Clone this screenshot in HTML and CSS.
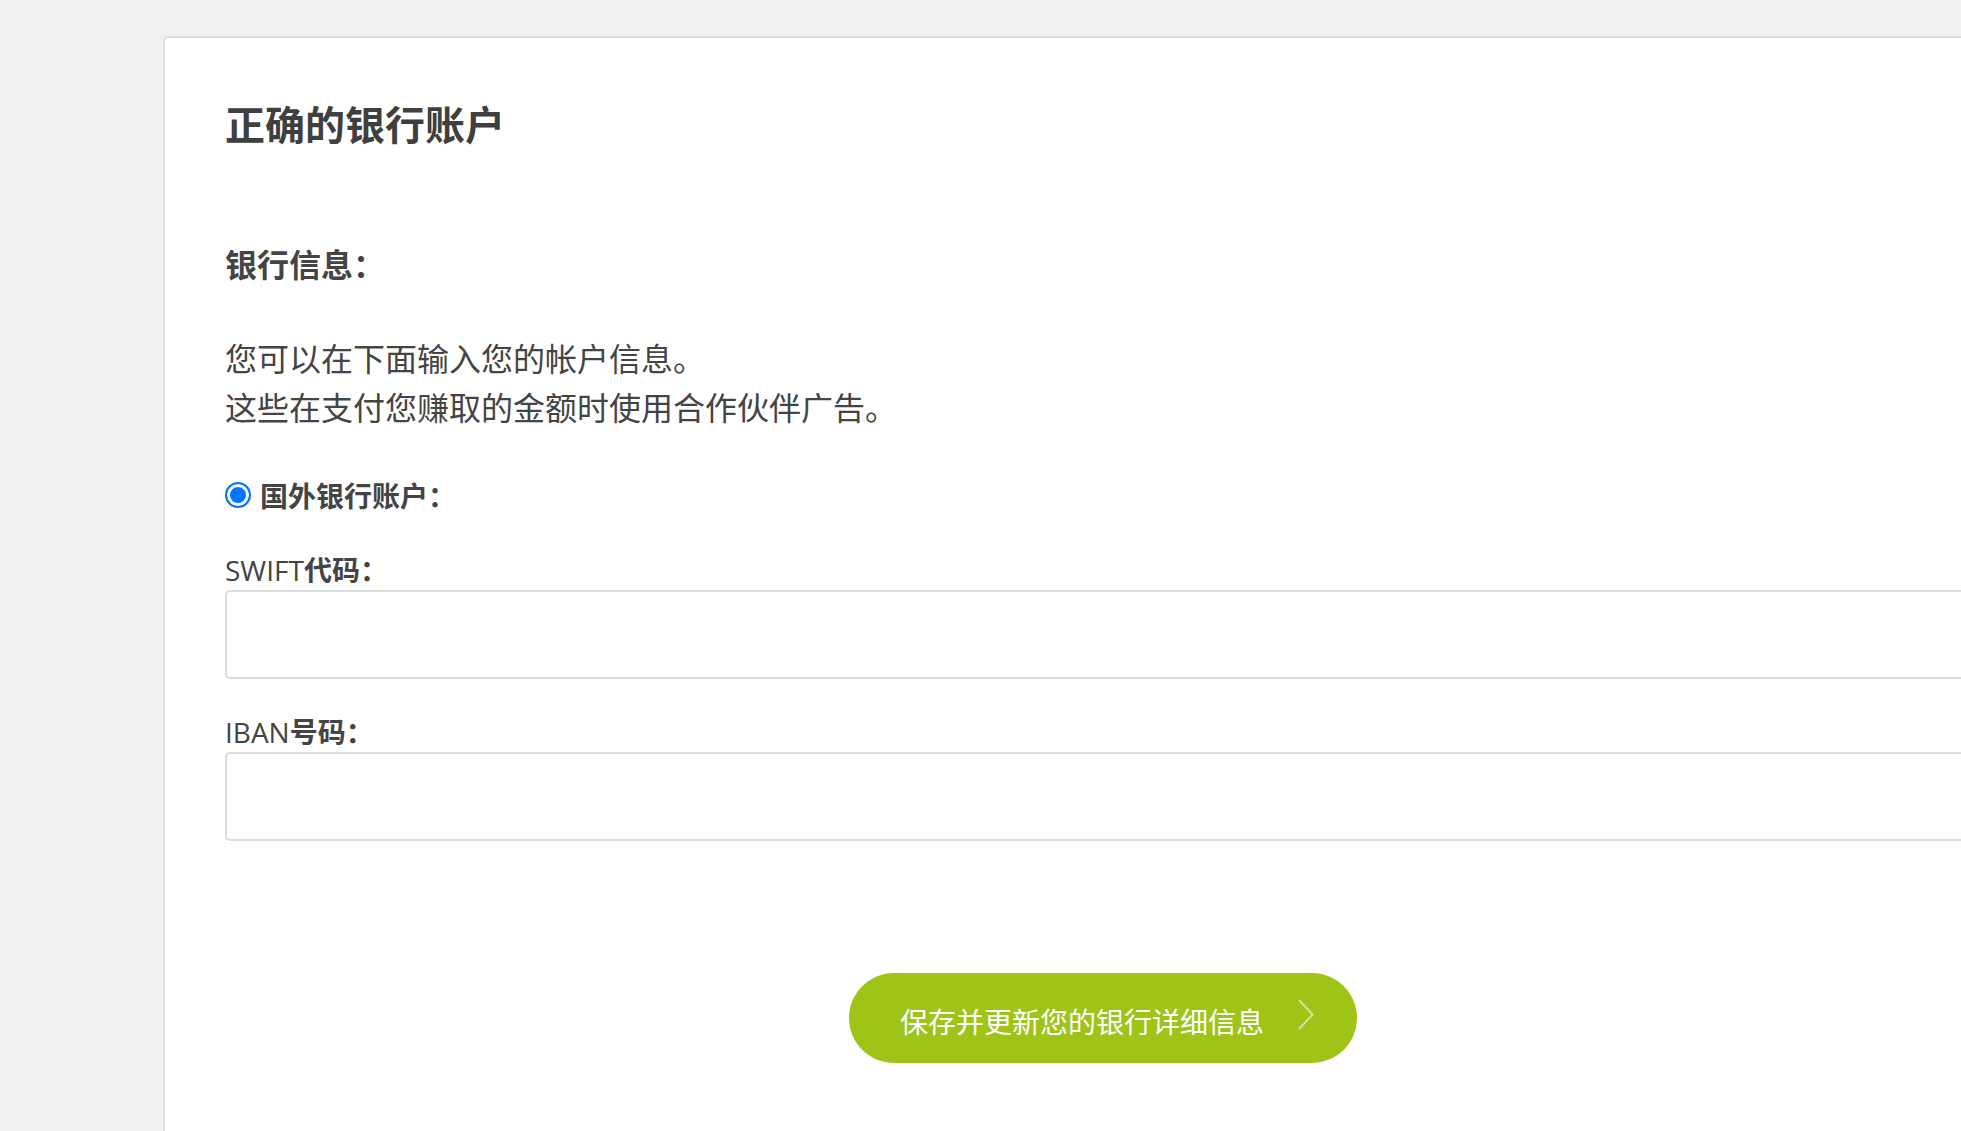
FILE: index.html
```html
<!DOCTYPE html>
<html lang="zh-CN">
<head>
<meta charset="utf-8">
<title>正确的银行账户</title>
<link rel="stylesheet" href="styles.css">
</head>
<body>
<main class="card">
  <h1 class="title">正确的银行账户</h1>
  <h2 class="section-heading">银行信息：</h2>
  <p class="intro">您可以在下面输入您的帐户信息。<br>这些在支付您赚取的金额时使用合作伙伴广告。</p>
  <label class="radio-row">
    <input class="radio" type="radio" name="acct" checked>
    <span class="radio-label">国外银行账户：</span>
  </label>
  <div class="field">
    <label class="field-label"><span class="latin">SWIFT</span>代码：</label>
    <input class="text-input" type="text">
  </div>
  <div class="field field-second">
    <label class="field-label"><span class="latin">IBAN</span>号码：</label>
    <input class="text-input" type="text">
  </div>
  <div class="actions">
    <button class="save-btn" type="button">
      <span class="save-text">保存并更新您的银行详细信息</span>
      <svg class="chev" width="16" height="31" viewBox="0 0 16 31" fill="none">
        <path d="M1.5 1.5 L14.5 15.5 L1.5 29.5" stroke="rgba(255,255,255,0.55)" stroke-width="2" stroke-linecap="round" stroke-linejoin="round"/>
      </svg>
    </button>
  </div>
</main>
</body>
</html>
```
FILE: styles.css
```css
html, body {
  margin: 0;
  padding: 0;
}
body {
  background: #f1f1f1;
  overflow: hidden;
  height: 1131px;
  font-family: "Open Sans", "Noto Sans CJK SC", sans-serif;
  color: #444;
}
.card {
  box-sizing: border-box;
  margin: 36px 0 0 163px;
  width: 1880px;
  height: 1095px;
  background: #fff;
  border: 2px solid #dcdcdc;
  border-bottom: none;
  border-radius: 5px 5px 0 0;
  padding: 61px 60px 0 60px;
}
.title {
  margin: 0;
  font-family: "Noto Sans CJK SC", sans-serif;
  font-size: 40px;
  line-height: 48px;
  font-weight: 700;
  color: #3f3f3f;
}
.section-heading {
  margin: 96px 0 0 0;
  font-family: "Noto Sans CJK SC", sans-serif;
  font-size: 32px;
  line-height: 40px;
  font-weight: 700;
  color: #444;
}
.intro {
  margin: 50px 0 0 0;
  font-family: "Noto Sans CJK SC", sans-serif;
  font-size: 32px;
  line-height: 49px;
  font-weight: 400;
  color: #444;
}
.radio-row {
  margin-top: 44px;
  display: flex;
  align-items: center;
  height: 40px;
}
.radio {
  appearance: none;
  -webkit-appearance: none;
  box-sizing: border-box;
  margin: 0;
  width: 26px;
  height: 26px;
  border-radius: 50%;
  border: 2px solid #0075ff;
  background: #0075ff;
  box-shadow: inset 0 0 0 3px #fff;
  flex: none;
}
.radio-label {
  margin-left: 9px;
  font-family: "Noto Sans CJK SC", sans-serif;
  font-size: 28px;
  line-height: 40px;
  font-weight: 700;
  color: #444;
}
.field {
  margin-top: 36px;
  display: flex;
  flex-direction: column;
}
.field-second {
  margin-top: 34px;
}
.field-label {
  font-family: "Noto Sans CJK SC", sans-serif;
  font-size: 28px;
  line-height: 36px;
  font-weight: 700;
  color: #444;
  margin-bottom: 2px;
}
.latin {
  font-family: "Open Sans", sans-serif;
  font-weight: 400;
}
.text-input {
  box-sizing: border-box;
  width: 100%;
  height: 89px;
  margin: 0;
  border: 2px solid #dcdcdc;
  border-radius: 5px;
  background: #fff;
  outline: none;
}
.actions {
  margin-top: 132px;
  display: flex;
  justify-content: center;
}
.save-btn {
  box-sizing: border-box;
  width: 508px;
  height: 90px;
  border: none;
  border-radius: 45px;
  background: #9ec417;
  color: #fff;
  display: flex;
  align-items: center;
  padding: 0 43px 0 51px;
  cursor: pointer;
}
.save-text {
  font-family: "Noto Sans CJK SC", sans-serif;
  font-size: 28px;
  line-height: 36px;
  font-weight: 400;
  white-space: nowrap;
  margin-top: 6px;
}
.chev {
  margin-left: auto;
  margin-top: -7px;
  flex: none;
}
```
